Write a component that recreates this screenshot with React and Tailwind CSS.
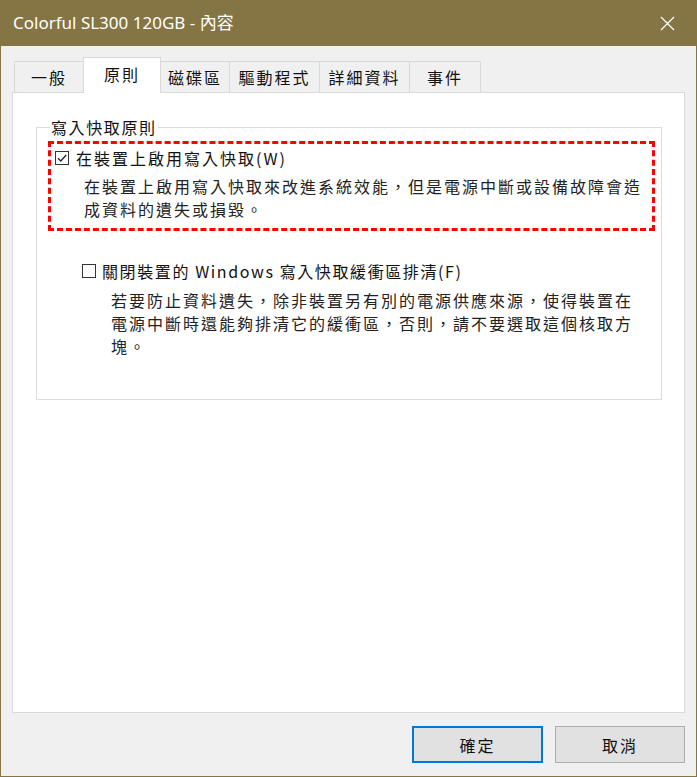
import React from 'react';

const cjk = { fontFamily: '"Noto Sans CJK TC", "Noto Sans", sans-serif' };

const tabs = [
    { id: 'general', label: '一般', w: 'w-[70px]' },
    { id: 'policy', label: '原則', w: 'w-[78px]', active: true },
    { id: 'volume', label: '磁碟區', w: 'w-[70px]' },
    { id: 'driver', label: '驅動程式', w: 'w-[91px]' },
    { id: 'details', label: '詳細資料', w: 'w-[91px]' },
    { id: 'events', label: '事件', w: 'w-[72px]' },
];

const CheckBox = ({ checked }) => (
    <span className="flex h-[14px] w-[14px] flex-shrink-0 items-center justify-center border border-[#333] bg-white">
        {checked && (
            <svg width="12" height="12" viewBox="0 0 12 12">
                <path d="M2 6.2 L4.8 9 L10.2 3" fill="none" stroke="#222" strokeWidth="1.3" />
            </svg>
        )}
    </span>
);

const App = () => {
    return (
        <div className="flex h-[777px] w-[697px] flex-col overflow-hidden border-x border-b border-[#857545] bg-[#f0f0f0]" style={cjk}>
            {/* Title bar */}
            <div className="-mx-px flex h-[46px] flex-shrink-0 items-center justify-between bg-[#857545] pl-[13px] pr-[22px]">
                <span className="text-[17px] text-white" style={{ fontFamily: '"Noto Sans", "Noto Sans CJK TC", sans-serif' }}>
                    Colorful SL300 120GB - 內容
                </span>
                <svg width="15" height="15" viewBox="0 0 15 15">
                    <path d="M1 1 L14 14 M14 1 L1 14" stroke="#fff" strokeWidth="1.2" />
                </svg>
            </div>

            {/* Body */}
            <div className="flex flex-1 flex-col px-[11px] pt-[11px]">
                {/* Tabs */}
                <div className="relative z-10 flex h-[35px] items-end pl-[2px]">
                    {tabs.map((t) =>
                        t.active ? (
                            <div
                                key={t.id}
                                className={`${t.w} -ml-px flex h-[36px] -mb-px items-center justify-center border-x border-t border-[#d9d9d9] bg-white pb-[3px] text-[16px] tracking-[2px] text-[#111]`}
                            >
                                {t.label}
                            </div>
                        ) : (
                            <div
                                key={t.id}
                                className={`${t.w} -ml-px flex h-[31px] items-center justify-center border-x border-t border-[#d9d9d9] bg-[#f0f0f0] text-[16px] tracking-[2px] text-[#111] first:ml-0`}
                            >
                                {t.label}
                            </div>
                        )
                    )}
                </div>

                {/* Panel */}
                <div className="h-[621px] border border-[#d9d9d9] bg-white pl-[23px] pr-[22px] pt-[24px]">
                    <fieldset className="h-[283px] border border-[#dcdcdc] pl-[11px] pr-[6px]">
                        <legend className="ml-[2px] px-[1px] text-[16px] leading-[20px] tracking-[1.6px] text-[#111]">
                            寫入快取原則
                        </legend>

                        <div className="mt-[4px] border-[3px] border-dashed border-[#ff0000] pb-[7px] pl-[4px] pt-[4px]">
                            <div className="flex items-center gap-[7px] text-[16px] leading-[20px] tracking-[2px] text-[#111]">
                                <CheckBox checked />
                                <span>在裝置上啟用寫入快取(W)</span>
                            </div>
                            <p className="mt-[7px] pl-[29px] text-[16px] leading-[23px] tracking-[2px] text-[#222]">
                                在裝置上啟用寫入快取來改進系統效能，但是電源中斷或設備故障會造成資料的遺失或損毀。
                            </p>
                        </div>

                        <div className="mt-[30px] pl-[34px] pr-[14px]">
                            <div className="flex items-center gap-[6px] text-[16px] leading-[20px] tracking-[1.6px] text-[#111]">
                                <CheckBox />
                                <span>關閉裝置的 Windows 寫入快取緩衝區排清(F)</span>
                            </div>
                            <p className="mt-[8px] pl-[29px] text-[16px] leading-[23px] tracking-[2px] text-[#222]">
                                若要防止資料遺失，除非裝置另有別的電源供應來源，使得裝置在電源中斷時還能夠排清它的緩衝區，否則，請不要選取這個核取方塊。
                            </p>
                        </div>
                    </fieldset>
                </div>

                {/* Buttons */}
                <div className="mt-[13px] flex justify-end gap-[12px]">
                    <button className="h-[37px] w-[131px] border-2 border-[#0078d7] bg-[#e1e1e1] text-[16px] tracking-[2px] text-[#111]">
                        確定
                    </button>
                    <button className="h-[37px] w-[130px] border border-[#adadad] bg-[#e1e1e1] text-[16px] tracking-[2px] text-[#111]">
                        取消
                    </button>
                </div>
            </div>
        </div>
    );
};

export default App;
